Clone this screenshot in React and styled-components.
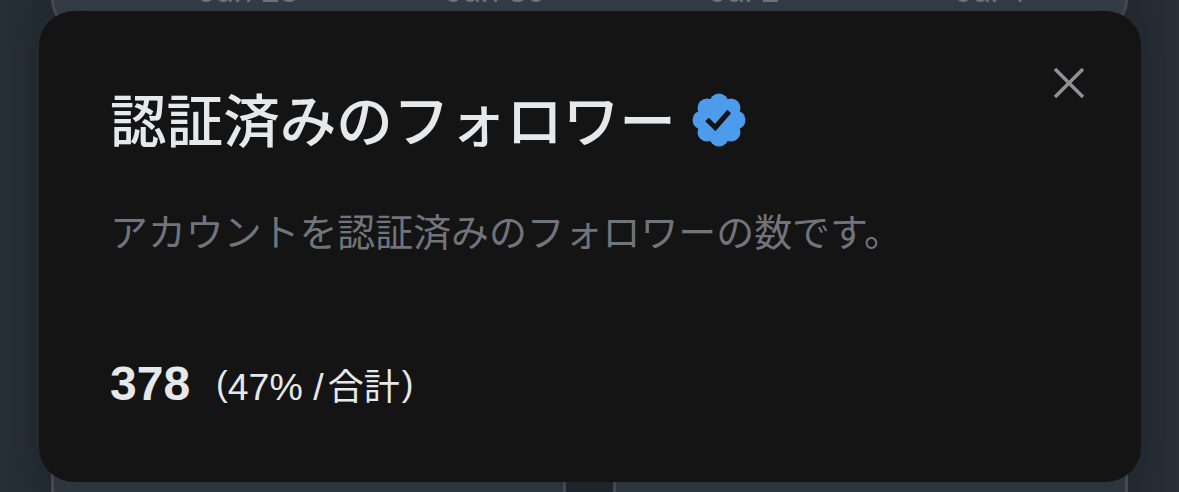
import React from 'react';
import styled, { createGlobalStyle } from 'styled-components';

const GlobalStyle = createGlobalStyle`
* {
  box-sizing: border-box;
}
body {
  margin: 0;
  background: #252c33;
  font-family: "Liberation Sans", "Noto Sans CJK JP", sans-serif;
}
`;

const Page = styled.div`
position: relative;
height: 492px;
overflow: hidden;
display: flex;
flex-direction: column;
justify-content: space-between;
padding: 0 51px;
background: linear-gradient(90deg, #272f36 0%, #232b32 4%, #20262c 50%, #232a31 96%, #292f36 100%);
`;

const ChartCard = styled.div`
height: 30px;
border: 3px solid #444b56;
border-top: 0;
border-radius: 0 0 30px 30px;
background: #353d48;
`;

const AxisLabels = styled.div`
display: grid;
grid-template-columns: 247px 264px 246px 120px;
padding-left: 145px;
margin-top: -26px;
color: #6f7680;
font-size: 33px;
line-height: 34px;
white-space: nowrap;
`;

const StatRow = styled.div`
display: grid;
grid-template-columns: 1fr 1fr;
gap: 47px;
height: 40px;
`;

const StatCard = styled.div`
border: solid #454c56;
border-width: 0 3px;
background: #2f3740;
`;

const Modal = styled.section`
position: absolute;
top: 11px;
left: 39px;
width: 1102px;
height: 471px;
padding: 66px 71px;
border-radius: 35px;
background: #141414;
box-shadow: 0 0 28px rgba(0, 0, 0, 0.12);
color: #e7e8ea;
`;

const Title = styled.h1`
display: flex;
align-items: center;
gap: 16px;
height: 80px;
margin: 0;
font-family: "Noto Sans CJK JP", sans-serif;
font-size: 56.6px;
font-weight: 500;
line-height: 80px;
white-space: nowrap;

svg {
  margin-top: 6px;
}
`;

const Description = styled.p`
margin: 45px 0 0;
font-family: "Noto Sans CJK JP", sans-serif;
font-size: 37.9px;
line-height: 56px;
color: #71747b;
white-space: nowrap;
`;

const Stats = styled.div`
display: flex;
align-items: baseline;
gap: 26px;
margin-top: 96px;
line-height: 60px;
`;

const Count = styled.strong`
font-size: 48px;
`;

const Share = styled.span`
font-size: 37.5px;
white-space: pre;
`;

const Paren = styled.span`
font-size: 35px;
line-height: 1;
vertical-align: 4px;
`;

const ShareUnit = styled.span`
margin: 0 2px 0 4px;
font-family: "Noto Sans CJK JP", sans-serif;
font-size: 36px;
line-height: 1;
`;

const CloseButton = styled.button`
position: absolute;
top: 56px;
right: 56px;
display: flex;
padding: 0;
border: 0;
background: none;
color: #919295;
`;

const VerifiedBadge = () => (
  <svg width="54" height="54" viewBox="0 0 54 54" aria-hidden="true">
    <g fill="#4c9ceb">
      <circle cx="27" cy="27" r="21" />
      <circle cx="27" cy="10" r="9.5" />
      <circle cx="39" cy="15" r="9.5" />
      <circle cx="44" cy="27" r="9.5" />
      <circle cx="39" cy="39" r="9.5" />
      <circle cx="27" cy="44" r="9.5" />
      <circle cx="15" cy="39" r="9.5" />
      <circle cx="10" cy="27" r="9.5" />
      <circle cx="15" cy="15" r="9.5" />
    </g>
    <path d="M15 26.5 L23.3 34.5 L37.2 18.5" fill="none" stroke="#141414" strokeWidth="5" />
  </svg>
);

const labels = ['Jun 28', 'Jun 30', 'Jul 2', 'Jul 4'];

const App = () => (
  <Page>
    <GlobalStyle />
    <ChartCard>
      <AxisLabels>
        {labels.map((label) => (
          <span key={label}>{label}</span>
        ))}
      </AxisLabels>
    </ChartCard>
    <StatRow>
      <StatCard />
      <StatCard />
    </StatRow>
    <Modal>
      <Title>
        認証済みのフォロワー
        <VerifiedBadge />
      </Title>
      <Description>アカウントを認証済みのフォロワーの数です。</Description>
      <Stats>
        <Count>378</Count>
        <Share>
          <Paren>(</Paren>
          47% /
          <ShareUnit>合計</ShareUnit>
          <Paren>)</Paren>
        </Share>
      </Stats>
      <CloseButton type="button" aria-label="閉じる">
        <svg width="32" height="32" viewBox="0 0 32 32" fill="none" stroke="currentColor" strokeWidth="3.4">
          <path d="M2 2 L30 30 M30 2 L2 30" />
        </svg>
      </CloseButton>
    </Modal>
  </Page>
);

export default App;
